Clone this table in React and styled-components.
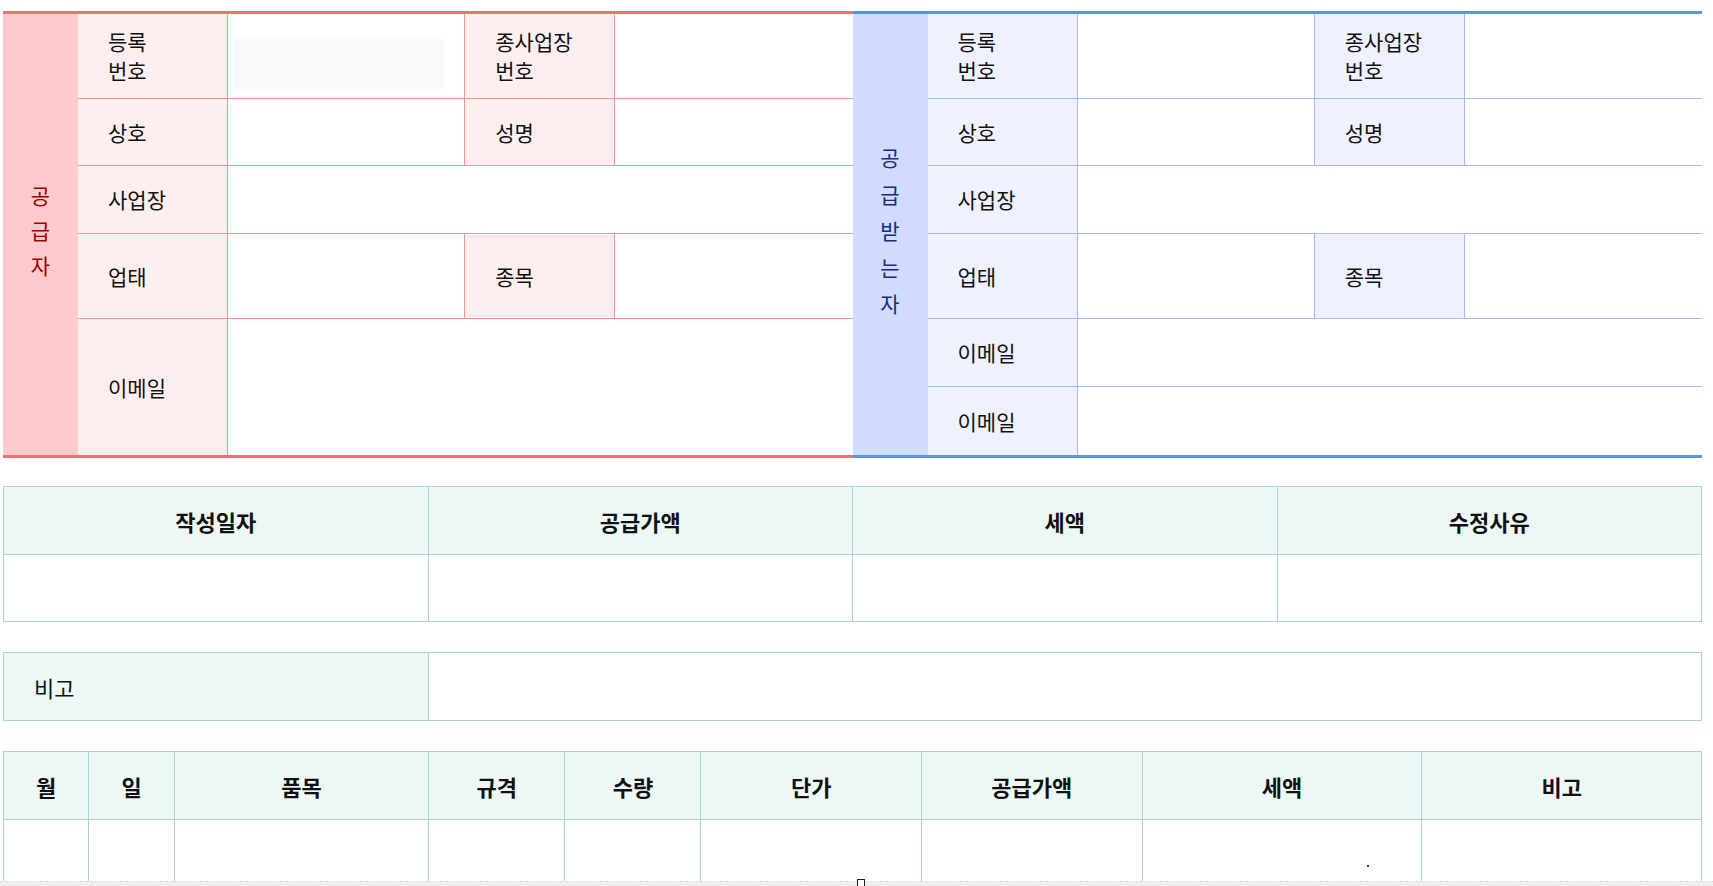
import styled, { createGlobalStyle } from "styled-components"

const GlobalStyle = createGlobalStyle`
  html, body {
    margin: 0;
    padding: 0;
    background: #ffffff;
    overflow: hidden;
  }
  body {
    font-family: "Noto Sans CJK KR", "Noto Sans", sans-serif;
    color: #111111;
  }
`

const tones = {
  supplier: {
    accent: "#f07272",
    side: "#fccaca",
    label: "#fdeff0",
    line: "#f39595",
    text: "#a10000",
  },
  buyer: {
    accent: "#5a96da",
    side: "#d0dbfd",
    label: "#eff2fe",
    line: "#a3baf6",
    text: "#1b2c7c",
  },
}

const teal = {
  line: "#aad2d7",
  head: "#ecf7f6",
}

const Page = styled.div`
  display: flex;
  flex-direction: column;
  padding: 11px 11px 0 3px;
`

const PartyBoard = styled.div`
  display: flex;
  align-items: flex-start;
`

const Party = styled.div`
  flex: 1;
  display: grid;
  grid-template-columns: 75px 150px 1fr 150px 1fr;
  grid-template-rows: ${(p) => p.$rows};
  border-top: 3px solid ${(p) => p.$tone.accent};
  border-bottom: 3px solid ${(p) => p.$tone.accent};
`

const SideTitle = styled.div`
  grid-row: 1 / -1;
  grid-column: 1;
  background: ${(p) => p.$tone.side};
  color: ${(p) => p.$tone.text};
  display: flex;
  flex-direction: column;
  align-items: center;
  justify-content: center;
  padding-bottom: 8px;
  font-size: 21px;
  line-height: ${(p) => p.$step}px;
`

const Label = styled.div`
  background: ${(p) => p.$tone.label};
  border-right: 1px solid ${(p) => p.$tone.line};
  border-bottom: ${(p) => (p.$last ? "none" : `1px solid ${p.$tone.line}`)};
  display: flex;
  align-items: center;
  padding-left: 30px;
  font-size: 21px;
  line-height: 29px;
`

const Value = styled.div`
  grid-column: ${(p) => (p.$span ? `span ${p.$span}` : "auto")};
  background: #ffffff;
  border-right: ${(p) => (p.$end ? "none" : `1px solid ${p.$tone.line}`)};
  border-bottom: ${(p) => (p.$last ? "none" : `1px solid ${p.$tone.line}`)};
  display: flex;
  align-items: center;
  padding-left: 5px;
`

const Masked = styled.div`
  width: 211px;
  height: 52px;
  margin-top: 15px;
  background: #f9f9f9;
  filter: blur(1.5px);
`

const Sheet = styled.div`
  display: grid;
  grid-template-columns: ${(p) => p.$cols};
  gap: 1px;
  margin-top: ${(p) => p.$mt}px;
  background: ${teal.line};
  border: 1px solid ${teal.line};
`

const Head = styled.div`
  height: 67px;
  background: ${teal.head};
  display: flex;
  align-items: center;
  justify-content: ${(p) => (p.$left ? "flex-start" : "center")};
  padding-left: ${(p) => (p.$left ? "30px" : "0")};
  font-size: 22px;
  font-weight: ${(p) => (p.$left ? 400 : 600)};
`

const Blank = styled.div`
  grid-column: ${(p) => (p.$span ? `span ${p.$span}` : "auto")};
  height: ${(p) => p.$h || 66}px;
  background: #ffffff;
  position: relative;
`

const Speck = styled.span`
  position: absolute;
  left: 224px;
  top: 45px;
  width: 2px;
  height: 2px;
  background: #444;
`

const PageEdge = styled.div`
  position: fixed;
  left: 0;
  right: 0;
  bottom: 0;
  height: 4px;
  background: #efefef;
  border-top: 1px dashed #dadada;
`

const Handle = styled.span`
  position: absolute;
  left: 857px;
  top: -3px;
  width: 6px;
  height: 7px;
  background: #ffffff;
  border: 1px solid #222;
`

function PartyPanel({ tone, title, step, rows, children }) {
  return (
    <Party $tone={tone} $rows={rows}>
      <SideTitle $tone={tone} $step={step}>
        {title.map((ch) => (
          <span key={ch}>{ch}</span>
        ))}
      </SideTitle>
      {children}
    </Party>
  )
}

const summaryHeads = ["작성일자", "공급가액", "세액", "수정사유"]
const itemHeads = ["월", "일", "품목", "규격", "수량", "단가", "공급가액", "세액", "비고"]

function App() {
  const s = tones.supplier
  const b = tones.buyer
  return (
    <>
      <GlobalStyle />
      <Page>
        <PartyBoard>
          <PartyPanel tone={s} step={35} title={["공", "급", "자"]} rows="85px 67px 68px 85px 136px">
            <Label $tone={s}>등록<br />번호</Label>
            <Value $tone={s}><Masked /></Value>
            <Label $tone={s}>종사업장<br />번호</Label>
            <Value $tone={s} $end />

            <Label $tone={s}>상호</Label>
            <Value $tone={s} />
            <Label $tone={s}>성명</Label>
            <Value $tone={s} $end />

            <Label $tone={s}>사업장</Label>
            <Value $tone={s} $span={3} $end />

            <Label $tone={s}>업태</Label>
            <Value $tone={s} />
            <Label $tone={s}>종목</Label>
            <Value $tone={s} $end />

            <Label $tone={s} $last>이메일</Label>
            <Value $tone={s} $span={3} $end $last />
          </PartyPanel>

          <PartyPanel tone={b} step={36.5} title={["공", "급", "받", "는", "자"]} rows="85px 67px 68px 85px 68px 68px">
            <Label $tone={b}>등록<br />번호</Label>
            <Value $tone={b} />
            <Label $tone={b}>종사업장<br />번호</Label>
            <Value $tone={b} $end />

            <Label $tone={b}>상호</Label>
            <Value $tone={b} />
            <Label $tone={b}>성명</Label>
            <Value $tone={b} $end />

            <Label $tone={b}>사업장</Label>
            <Value $tone={b} $span={3} $end />

            <Label $tone={b}>업태</Label>
            <Value $tone={b} />
            <Label $tone={b}>종목</Label>
            <Value $tone={b} $end />

            <Label $tone={b}>이메일</Label>
            <Value $tone={b} $span={3} $end />

            <Label $tone={b} $last>이메일</Label>
            <Value $tone={b} $span={3} $end $last />
          </PartyPanel>
        </PartyBoard>

        <Sheet $cols="1fr 1fr 1fr 1fr" $mt={28}>
          {summaryHeads.map((h) => (
            <Head key={h}>{h}</Head>
          ))}
          {summaryHeads.map((h) => (
            <Blank key={h} />
          ))}
        </Sheet>

        <Sheet $cols="1fr 1fr 1fr 1fr" $mt={30}>
          <Head $left>비고</Head>
          <Blank $span={3} $h={67} />
        </Sheet>

        <Sheet $cols="5fr 5fr 15fr 8fr 8fr 13fr 13fr 16.5fr 16.5fr" $mt={30}>
          {itemHeads.map((h, i) => (
            <Head key={i}>{h}</Head>
          ))}
          {itemHeads.map((h, i) => (
            <Blank key={i} $h={67}>
              {i === 7 && <Speck />}
            </Blank>
          ))}
        </Sheet>
      </Page>
      <PageEdge>
        <Handle />
      </PageEdge>
    </>
  )
}

export default App
